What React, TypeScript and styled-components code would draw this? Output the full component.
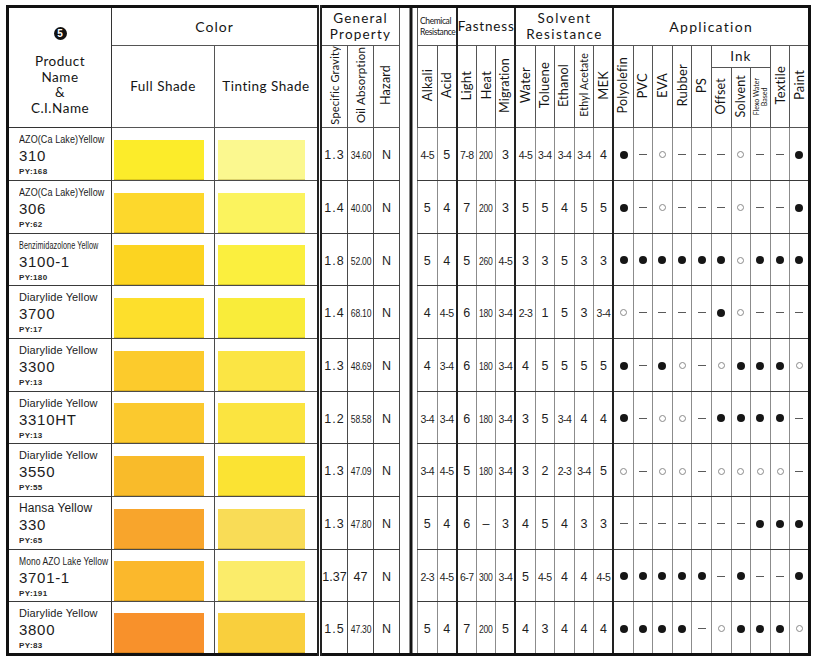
import * as React from "react";
import styled, { createGlobalStyle, css } from "styled-components";

const GlobalStyle = createGlobalStyle`
  html, body {
    margin: 0;
    background: #fff;
  }
  body {
    font-family: "Liberation Sans", Arial, sans-serif;
    color: #1c1c1c;
  }
`;

const Page = styled.div`
  padding: 5px 0 0 6px;
`;

const Sheet = styled.table`
  border-collapse: collapse;
  table-layout: fixed;
  width: 802px;
  border: 3px solid #111;
`;

const Col = styled.col<{ $w: number }>`
  width: ${(p) => p.$w}px;
`;

const HeadRow = styled.tr<{ $h: number }>`
  height: ${(p) => p.$h}px;
`;

const Head = styled.th<{ $size?: number; $edge?: boolean; $double?: boolean; $spacing?: number }>`
  font-family: Lato, "Open Sans", sans-serif;
  font-weight: 400;
  font-size: ${(p) => p.$size ?? 14}px;
  letter-spacing: ${(p) => p.$spacing ?? 0.6}px;
  line-height: 1.12;
  color: #151515;
  text-align: center;
  vertical-align: middle;
  padding: 0;
  border: 1px solid #555;
  ${(p) => p.$edge && css`border-left: 2px solid #222;`}
  ${(p) => p.$double && css`border-right: 5px double #222;`}
`;

const ProductHeadCell = styled.th`
  font-family: Lato, "Open Sans", sans-serif;
  font-weight: 400;
  font-size: 13.5px;
  line-height: 15.5px;
  letter-spacing: 0.5px;
  color: #151515;
  text-align: center;
  vertical-align: top;
  padding: 19px 0 0 0;
  border: 1px solid #333;
`;

const Gap = styled.td`
  padding: 0;
  border: none;
  background: linear-gradient(to right, #fff 9px, #151515 9px, #151515 12px, #fff 12px);
`;

const GapHead = styled.th`
  padding: 0;
  border: none;
  background: linear-gradient(to right, #fff 9px, #151515 9px, #151515 12px, #fff 12px);
`;

const VText = styled.span<{ $size?: number }>`
  display: inline-block;
  writing-mode: vertical-rl;
  transform: rotate(180deg);
  white-space: nowrap;
  font-size: ${(p) => p.$size ?? 13}px;
  letter-spacing: 0.2px;
  line-height: 1;
`;

const Flexo = styled.span`
  display: inline-block;
  writing-mode: vertical-rl;
  transform: rotate(180deg);
  white-space: nowrap;
  font-size: 7px;
  line-height: 7.5px;
  letter-spacing: 0;
  text-align: center;
`;

const Badge = styled.div`
  width: 13px;
  height: 13px;
  margin: 0 auto 14px;
  border-radius: 50%;
  background: #111;
  color: #fff;
  font-family: "Liberation Sans", Arial, sans-serif;
  font-weight: 700;
  font-size: 10px;
  line-height: 13px;
  letter-spacing: 0;
  text-align: center;
`;

const HeadLine = styled.div`
  white-space: nowrap;
`;

const Tiny = styled.span`
  display: block;
  font-size: 8.5px;
  line-height: 10.5px;
  letter-spacing: -0.4px;
  text-align: left;
  padding-left: 2px;
`;

const Row = styled.tr`
  height: 52.7px;
`;

const Cell = styled.td<{ $edge?: boolean; $light?: boolean }>`
  padding: 0;
  text-align: center;
  vertical-align: middle;
  border: 1px solid ${(p) => (p.$light ? "#8c8c8c" : "#4a4a4a")};
  border-bottom: 1px solid #3a3a3a;
  border-top: 1px solid #3a3a3a;
  ${(p) => p.$edge && css`border-left: 2px solid #222;`}
`;

const SwatchCell = styled.td<{ $pl: number; $pr: number; $double?: boolean }>`
  padding: 0 ${(p) => p.$pr}px 0 ${(p) => p.$pl}px;
  vertical-align: bottom;
  border: 1px solid #4a4a4a;
  ${(p) => p.$double && css`border-right: 5px double #222;`}
`;

const Swatch = styled.div<{ $color: string }>`
  height: 40px;
  background: ${(p) => p.$color};
  box-shadow: inset 0 -1px 0 rgba(120, 90, 0, 0.25);
`;

const ProductCell = styled.td`
  padding: 2px 0 0 10px;
  vertical-align: middle;
  border: 1px solid #333;
  border-bottom: 1px solid #3a3a3a;
`;

const NameLine = styled.div<{ $size: number; $scale: number }>`
  font-size: ${(p) => p.$size}px;
  line-height: 14px;
  height: 14px;
  white-space: nowrap;
  letter-spacing: 0.1px;
  transform: scaleX(${(p) => p.$scale});
  transform-origin: left center;
`;

const Code = styled.div`
  font-size: 15px;
  line-height: 20px;
  letter-spacing: 0.7px;
`;

const Py = styled.div`
  font-size: 8px;
  font-weight: 700;
  line-height: 12px;
  letter-spacing: 0.4px;
  color: #2a2a2a;
`;

const Num = styled.span<{ $kind: "big" | "pair" | "narrow" | "sg" }>`
  display: inline-block;
  white-space: nowrap;
  color: #1e1e1e;
  ${(p) =>
    p.$kind === "big" &&
    css`
      font-size: 12.5px;
    `}
  ${(p) =>
    p.$kind === "sg" &&
    css`
      font-size: 12.5px;
      letter-spacing: 1px;
    `}
  ${(p) =>
    p.$kind === "pair" &&
    css`
      font-size: 10.5px;
      letter-spacing: -0.5px;
    `}
  ${(p) =>
    p.$kind === "narrow" &&
    css`
      font-size: 11px;
      letter-spacing: -0.3px;
      transform: scaleX(0.78);
    `}
`;

const Mark = styled.span<{ $kind: string }>`
  display: inline-block;
  vertical-align: middle;
  ${(p) =>
    p.$kind === "f" &&
    css`
      width: 8px;
      height: 8px;
      border-radius: 50%;
      background: #161616;
    `}
  ${(p) =>
    p.$kind === "o" &&
    css`
      width: 7px;
      height: 7px;
      border-radius: 50%;
      border: 1px solid #8a8a8a;
      box-sizing: border-box;
    `}
  ${(p) =>
    p.$kind === "-" &&
    css`
      width: 8px;
      height: 1px;
      background: #5a5a5a;
    `}
`;

type Product = {
  name: string;
  size: number;
  scale: number;
  code: string;
  py: string;
  full: string;
  tint: string;
  sg: string;
  oa: string;
  vals: string[];
  app: string;
};

const products: Product[] = [
  { name: "AZO(Ca Lake)Yellow", size: 11, scale: 0.82, code: "310", py: "PY:168", full: "#fcec2a", tint: "#fbf88f", sg: "1.3", oa: "34.60", vals: ["4-5", "5", "7-8", "200", "3", "4-5", "3-4", "3-4", "3-4", "4"], app: "f-o---o--f" },
  { name: "AZO(Ca Lake)Yellow", size: 11, scale: 0.82, code: "306", py: "PY:62", full: "#fdd82c", tint: "#fbf35e", sg: "1.4", oa: "40.00", vals: ["5", "4", "7", "200", "3", "5", "5", "4", "5", "5"], app: "f-o---o--f" },
  { name: "Benzimidazolone Yellow", size: 11, scale: 0.66, code: "3100-1", py: "PY:180", full: "#fcd421", tint: "#fbef3e", sg: "1.8", oa: "52.00", vals: ["5", "4", "5", "260", "4-5", "3", "3", "5", "3", "3"], app: "ffffffofff" },
  { name: "Diarylide Yellow", size: 11, scale: 1, code: "3700", py: "PY:17", full: "#fddf2c", tint: "#f9ec3a", sg: "1.4", oa: "68.10", vals: ["4", "4-5", "6", "180", "3-4", "2-3", "1", "5", "3", "3-4"], app: "o----fo---" },
  { name: "Diarylide Yellow", size: 11, scale: 1, code: "3300", py: "PY:13", full: "#fccb2c", tint: "#fbe544", sg: "1.3", oa: "48.69", vals: ["4", "3-4", "6", "180", "3-4", "4", "5", "5", "5", "5"], app: "f-fo-offfo" },
  { name: "Diarylide Yellow", size: 11, scale: 1, code: "3310HT", py: "PY:13", full: "#fbc92e", tint: "#fbe440", sg: "1.2", oa: "58.58", vals: ["3-4", "3-4", "6", "180", "3-4", "3", "5", "3-4", "4", "4"], app: "f-oo-ffff-" },
  { name: "Diarylide Yellow", size: 11, scale: 1, code: "3550", py: "PY:55", full: "#f9bb2a", tint: "#fbe333", sg: "1.3", oa: "47.09", vals: ["3-4", "4-5", "5", "180", "3-4", "3", "2", "2-3", "3-4", "5"], app: "o-oo-oooo-" },
  { name: "Hansa Yellow", size: 12, scale: 1, code: "330", py: "PY:65", full: "#f8a52c", tint: "#f9dc56", sg: "1.3", oa: "47.80", vals: ["5", "4", "6", "–", "3", "4", "5", "4", "3", "3"], app: "-------fff" },
  { name: "Mono AZO Lake Yellow", size: 11, scale: 0.77, code: "3701-1", py: "PY:191", full: "#fbb82c", tint: "#fbec6a", sg: "1.37", oa: "47", vals: ["2-3", "4-5", "6-7", "300", "3-4", "5", "4-5", "4", "4", "4-5"], app: "fffff-f--f" },
  { name: "Diarylide Yellow", size: 11, scale: 1, code: "3800", py: "PY:83", full: "#f8912b", tint: "#f9cf3d", sg: "1.5", oa: "47.30", vals: ["5", "4", "7", "200", "5", "4", "3", "4", "4", "4"], app: "ffff-offfo" },
];

// columns that start a new group get a darker rule on their left
const valEdges = [false, false, true, false, false, true, false, false, false, false];

function kindOf(text: string): "big" | "pair" | "narrow" {
  if (text.length <= 2 && !text.includes("-")) return "big";
  if (text.includes("-")) return "pair";
  return "narrow";
}

function ProductRow({ p }: { p: Product }) {
  return (
    <Row>
      <ProductCell>
        <NameLine $size={p.size} $scale={p.scale}>
          {p.name}
        </NameLine>
        <Code>{p.code}</Code>
        <Py>{p.py}</Py>
      </ProductCell>
      <SwatchCell $pl={2} $pr={10}>
        <Swatch $color={p.full} />
      </SwatchCell>
      <SwatchCell $pl={3} $pr={12} $double>
        <Swatch $color={p.tint} />
      </SwatchCell>
      <Cell>
        <Num $kind={p.sg.length > 3 ? "big" : "sg"}>{p.sg}</Num>
      </Cell>
      <Cell>
        <Num $kind={p.oa.length > 2 ? "narrow" : "big"}>{p.oa}</Num>
      </Cell>
      <Cell>
        <Num $kind="big">N</Num>
      </Cell>
      <Gap />
      {p.vals.map((v, i) => (
        <Cell key={i} $light $edge={valEdges[i]}>
          <Num $kind={kindOf(v)}>{v}</Num>
        </Cell>
      ))}
      {p.app.split("").map((k, i) => (
        <Cell key={"a" + i} $light $edge={i === 0}>
          <Mark $kind={k} />
        </Cell>
      ))}
    </Row>
  );
}

const verticalHeads: [string, number, boolean][] = [
  ["Alkali", 13, false],
  ["Acid", 13, false],
  ["Light", 13, true],
  ["Heat", 13, false],
  ["Migration", 12.5, false],
  ["Water", 13, true],
  ["Toluene", 13, false],
  ["Ethanol", 12.5, false],
  ["Ethyl Acetate", 10.5, false],
  ["MEK", 13, false],
  ["Polyolefin", 12.5, true],
  ["PVC", 13, false],
  ["EVA", 13, false],
  ["Rubber", 13, false],
  ["PS", 13, false],
];

export default function App() {
  return (
    <Page>
      <GlobalStyle />
      <Sheet>
        <colgroup>
          <Col $w={104} />
          <Col $w={103} />
          <Col $w={105} />
          <Col $w={28} />
          <Col $w={26} />
          <Col $w={26} />
          <Col $w={18} />
          {Array.from({ length: 20 }).map((_, i) => (
            <Col key={i} $w={19.6} />
          ))}
        </colgroup>
        <tbody>
          <HeadRow $h={39}>
            <ProductHeadCell rowSpan={3}>
              <Badge>5</Badge>
              <HeadLine>Product</HeadLine>
              <HeadLine>Name</HeadLine>
              <HeadLine>&amp;</HeadLine>
              <HeadLine>C.I.Name</HeadLine>
            </ProductHeadCell>
            <Head colSpan={2} $double $spacing={1}>
              Color
            </Head>
            <Head colSpan={3} $size={13.5} $spacing={1.2}>
              General
              <br />
              Property
            </Head>
            <GapHead rowSpan={3} />
            <Head colSpan={2}>
              <Tiny>Chemical</Tiny>
              <Tiny>Resistance</Tiny>
            </Head>
            <Head colSpan={3} $edge $size={13.5} $spacing={0.8}>
              Fastness
            </Head>
            <Head colSpan={5} $edge $size={13.5} $spacing={1.4}>
              Solvent
              <br />
              Resistance
            </Head>
            <Head colSpan={10} $edge $size={14} $spacing={1.3}>
              Application
            </Head>
          </HeadRow>
          <HeadRow $h={22}>
            <Head rowSpan={2} $size={13.5} $spacing={0.5}>
              Full Shade
            </Head>
            <Head rowSpan={2} $size={13.5} $spacing={0.5} $double>
              Tinting Shade
            </Head>
            <Head rowSpan={2}>
              <VText $size={11}>Specific Gravity</VText>
            </Head>
            <Head rowSpan={2}>
              <VText $size={11.5}>Oil Absorption</VText>
            </Head>
            <Head rowSpan={2}>
              <VText $size={12.5}>Hazard</VText>
            </Head>
            {verticalHeads.map(([label, size, edge]) => (
              <Head key={label} rowSpan={2} $edge={edge}>
                <VText $size={size}>{label}</VText>
              </Head>
            ))}
            <Head colSpan={3} $size={13.5} $spacing={1}>
              Ink
            </Head>
            <Head rowSpan={2}>
              <VText $size={13}>Textile</VText>
            </Head>
            <Head rowSpan={2}>
              <VText $size={13}>Paint</VText>
            </Head>
          </HeadRow>
          <HeadRow $h={60}>
            <Head>
              <VText $size={12.5}>Offset</VText>
            </Head>
            <Head>
              <VText $size={12.5}>Solvent</VText>
            </Head>
            <Head>
              <Flexo>
                Flexo Water
                <br />
                Based
              </Flexo>
            </Head>
          </HeadRow>
          {products.map((p, i) => (
            <ProductRow key={i} p={p} />
          ))}
        </tbody>
      </Sheet>
    </Page>
  );
}
